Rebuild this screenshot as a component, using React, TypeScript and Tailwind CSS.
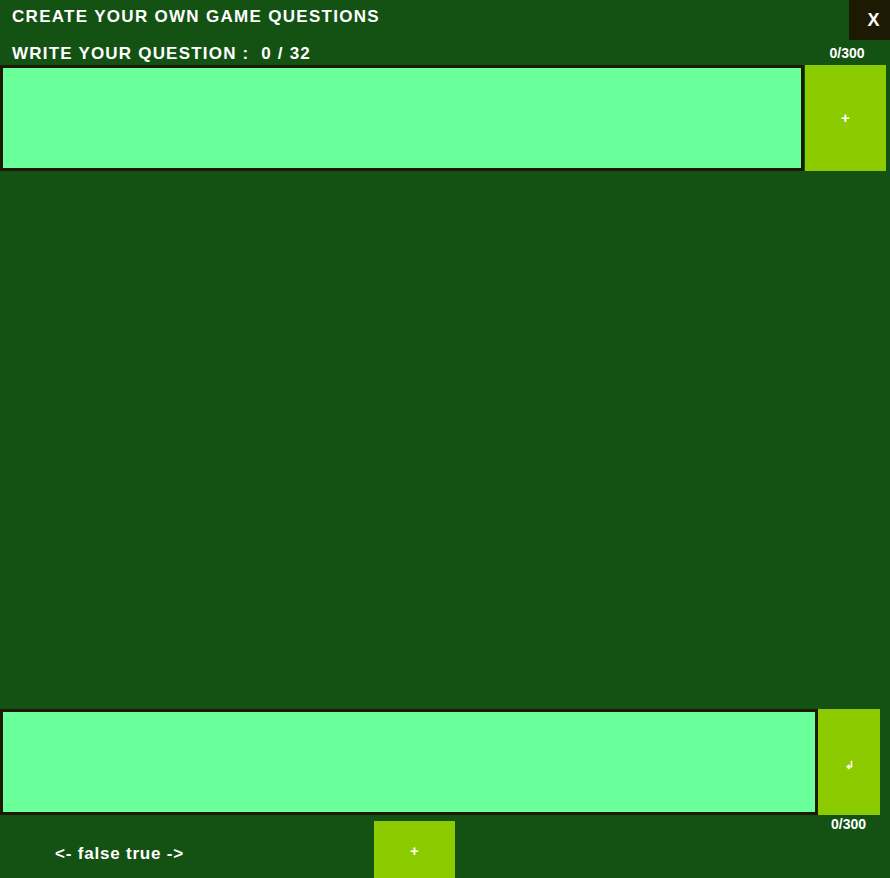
export default function App() {
  return (
    <div className="flex h-[878px] w-[890px] flex-col overflow-hidden bg-[#145214] font-['Liberation_Sans',Arial,sans-serif] font-bold text-white">
      <div className="flex h-[40px] items-start justify-between">
        <h1 className="pl-[12px] pt-[7px] text-[17px] leading-[19px] tracking-[1.3px]">
          CREATE YOUR OWN GAME QUESTIONS
        </h1>
        <button type="button" className="h-[40px] w-[41px] bg-[#1d1a04] pl-[8px] pt-[1px] text-[18px]">
          X
        </button>
      </div>
      <div className="flex h-[25px] items-start">
        <p className="pl-[12px] pt-[4px] text-[17px] leading-[19px] tracking-[1.2px] whitespace-pre">
          WRITE YOUR QUESTION :  0 / 32
        </p>
        <span className="ml-auto w-[81px] pr-[5px] pt-[5px] text-center text-[14px] leading-[16px]">0/300</span>
      </div>
      <div className="flex h-[106px]">
        <textarea className="h-full w-[804px] resize-none border-[3.5px] border-[#1d1a04] bg-[#6aff9a] outline-none" />
        <button type="button" className="ml-[1px] h-full w-[81px] bg-[#8bcb00] text-[15px]">
          +
        </button>
      </div>
      <div className="flex-1" />
      <div className="flex h-[106px]">
        <textarea className="h-full w-[818px] resize-none border-[3.5px] border-[#1d1a04] bg-[#6aff9a] outline-none" />
        <button type="button" className="h-full w-[62px] bg-[#8bcb00] pt-[6px] text-[11px]">
          ↲
        </button>
      </div>
      <div className="flex h-[63px] items-start">
        <span className="ml-[55px] mt-[29px] w-[319px] shrink-0 text-[17px] leading-[19px] tracking-[0.8px]">
          &lt;- false true -&gt;
        </span>
        <button type="button" className="mt-[6px] h-[60px] w-[81px] bg-[#8bcb00] text-[15px]">
          +
        </button>
        <span className="ml-auto mr-[24px] mt-[1px] text-[14px] leading-[16px]">0/300</span>
      </div>
    </div>
  );
}
